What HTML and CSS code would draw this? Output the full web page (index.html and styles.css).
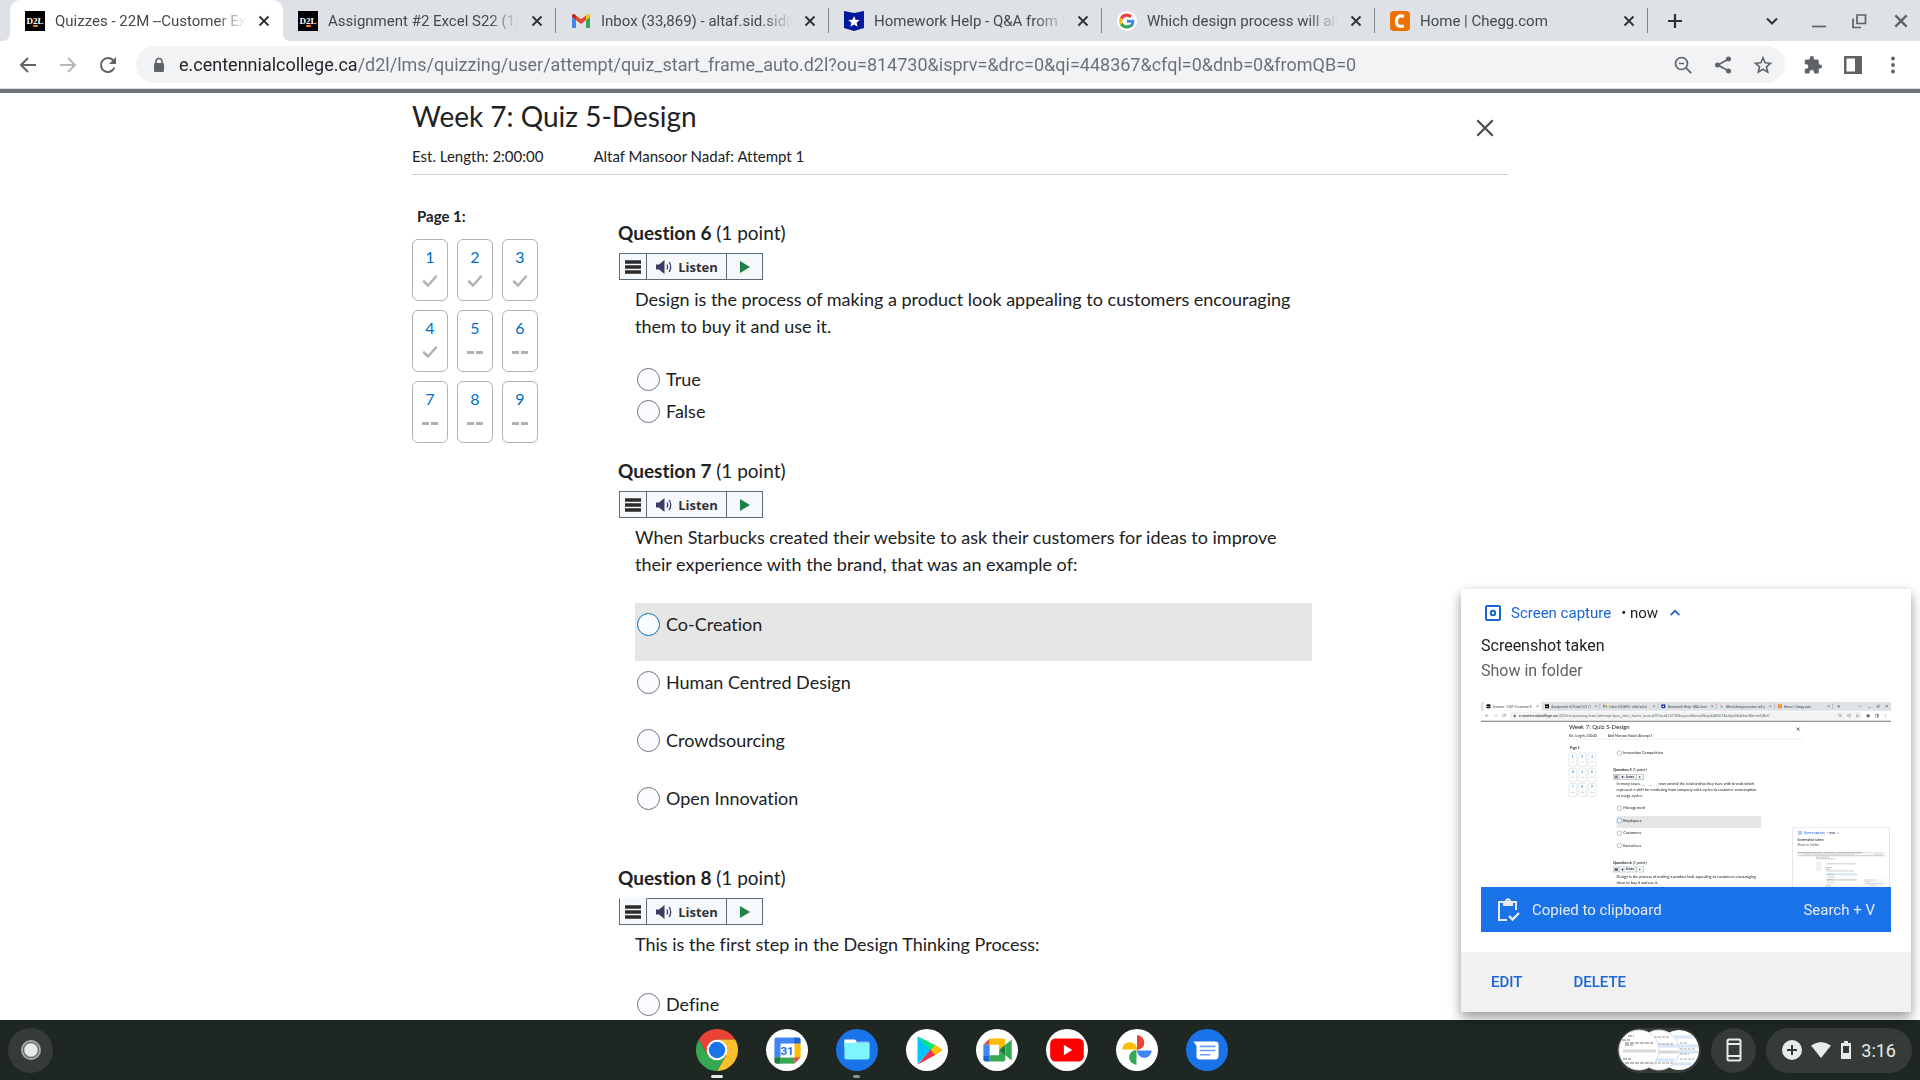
FILE: index.html
```html
<!DOCTYPE html>
<html lang="en">
<head>
    <meta charset="UTF-8">
    <meta name="viewport" content="width=device-width, initial-scale=1.0">
    <title>Quizzes - 22M --Customer Experience</title>
    <link rel="stylesheet" href="styles.css">
</head>
<body>
    <!-- Shared icons -->
    <svg class="icon-defs" aria-hidden="true">
        <symbol id="i-d2l" viewBox="0 0 20 20">
            <rect width="20" height="20" fill="#000"/>
            <rect x="8" y="14" width="5" height="2" fill="#e87511"/>
            <text x="10" y="13" text-anchor="middle" font-family="Liberation Serif, serif" font-weight="bold" font-size="9" fill="#fff">D2L</text>
        </symbol>
        <symbol id="i-gmail" viewBox="0 0 20 20">
            <path fill="#4285f4" d="M1 6l4 3v8H2.300A1.300 1.300 0 0 1 1 15.700z"/>
            <path fill="#34a853" d="M19 6l-4 3v8h2.700a1.300 1.300 0 0 0 1.300-1.300z"/>
            <path fill="#ea4335" d="M5 4.500l5 3.800 5-3.800V9l-5 4-5-4z"/>
            <path fill="#fbbc04" d="M15 4.500V9l4-3V5c0-2-2-2.500-3.200-1.300z"/>
            <path fill="#c5221f" d="M5 4.500V9L1 6V5c0-2 2-2.500 3.200-1.300z"/>
        </symbol>
        <symbol id="i-star-badge" viewBox="0 0 20 20">
            <path fill="#00189b" d="M0 0l10 2 10-2v17l-10 3-10-3z"/>
            <path fill="#fff" d="M10 5l1.600 3.800 4 .3-3 2.700 1 4-3.600-2.200-3.600 2.200 1-4-3-2.700 4-.3z"/>
        </symbol>
        <symbol id="i-google" viewBox="0 0 20 20">
            <circle cx="10" cy="10" r="10" fill="#fff"/>
            <path fill="#4285f4" d="M17.300 8.700H10v3h4.200a3.700 3.700 0 0 1-1.600 2.400l2.500 2c1.600-1.500 2.600-3.900 2.200-7.400z"/>
            <path fill="#34a853" d="M10 17.400c2 0 3.800-.7 5.100-1.900l-2.500-2c-2.200 1.600-6 .8-7-1.800L3 13.700a7.500 7.500 0 0 0 7 3.700z"/>
            <path fill="#fbbc05" d="M5.600 11.700a4.600 4.600 0 0 1 0-3.200L3 6.400a7.600 7.600 0 0 0 0 7.300z"/>
            <path fill="#ea4335" d="M5.600 8.500C6.700 5.400 10.500 4.700 12.900 7l2.200-2.200C11.500 1.300 5.400 1.900 3 6.400z"/>
        </symbol>
        <symbol id="i-chegg" viewBox="0 0 20 20">
            <rect width="20" height="20" rx="4" fill="#eb7100"/>
            <path d="M14 5.500C9 3.800 6.500 6 6.500 10.500S9.500 16 14 15" fill="none" stroke="#fff" stroke-width="3.200"/>
        </symbol>
        <symbol id="i-close" viewBox="0 0 16 16">
            <path d="M3.500 3.500l9 9M12.500 3.500l-9 9" fill="none" stroke="currentColor" stroke-width="1.900"/>
        </symbol>
        <symbol id="i-close-thin" viewBox="0 0 20 20">
            <path d="M3 3l14 14M17 3L3 17" fill="none" stroke="currentColor" stroke-width="2"/>
        </symbol>
        <symbol id="i-back" viewBox="0 0 20 20">
            <path d="M18 10H3M10 3l-7 7 7 7" fill="none" stroke="currentColor" stroke-width="2"/>
        </symbol>
        <symbol id="i-reload" viewBox="0 0 20 20">
            <path d="M16.500 12.500a7 7 0 1 1-1.600-7.500l1.600 1.600" fill="none" stroke="currentColor" stroke-width="2"/>
            <path d="M18 2v7h-7z" fill="currentColor"/>
        </symbol>
        <symbol id="i-lock" viewBox="0 0 16 16">
            <path d="M5 7V4.500a3 3 0 0 1 6 0V7" fill="none" stroke="currentColor" stroke-width="1.600"/>
            <rect x="3" y="6" width="10" height="9" rx="1.200" fill="currentColor"/>
        </symbol>
        <symbol id="i-zoom" viewBox="0 0 20 20">
            <g fill="none" stroke="currentColor" stroke-width="1.700"><circle cx="8.500" cy="8.500" r="6"/><path d="M12.700 12.700l5.500 5.500M6 8.500h5"/></g>
        </symbol>
        <symbol id="i-share" viewBox="0 0 20 20">
            <path d="M15.500 4L5 10l10.500 6" fill="none" stroke="currentColor" stroke-width="1.700"/>
            <g fill="currentColor"><circle cx="15.500" cy="4" r="2.500"/><circle cx="4.500" cy="10" r="2.500"/><circle cx="15.500" cy="16" r="2.500"/></g>
        </symbol>
        <symbol id="i-star" viewBox="0 0 20 20">
            <path d="M10 2.800l2.100 5 5.400.5-4.100 3.500 1.300 5.300-4.700-2.900-4.700 2.900 1.300-5.300-4.100-3.500 5.400-.5z" fill="none" stroke="currentColor" stroke-width="1.600"/>
        </symbol>
        <symbol id="i-puzzle" viewBox="0 0 20 20">
            <path fill="currentColor" d="M17 9.500h-1.200V6.100c0-.9-.7-1.600-1.600-1.600h-3.300V3.200a2.100 2.100 0 0 0-4.200 0v1.300H3.400c-.9 0-1.600.7-1.600 1.600v3.100H3a2.300 2.300 0 0 1 0 4.600H1.800v3.100c0 .9.700 1.600 1.600 1.600h3.100v-1.200a2.300 2.300 0 0 1 4.600 0v1.200h3.100c.9 0 1.600-.7 1.600-1.600v-3.300H17a2.050 2.050 0 0 0 0-4.100z"/>
        </symbol>
        <symbol id="i-panel" viewBox="0 0 20 20">
            <path fill="currentColor" fill-rule="evenodd" d="M1 1h18v18H1zM3.500 3.500v13H12v-13z"/>
        </symbol>
        <symbol id="i-dots" viewBox="0 0 20 20">
            <g fill="currentColor"><circle cx="10" cy="3.500" r="1.900"/><circle cx="10" cy="10" r="1.900"/><circle cx="10" cy="16.500" r="1.900"/></g>
        </symbol>
        <symbol id="i-plus" viewBox="0 0 16 16">
            <path d="M8 1v14M1 8h14" fill="none" stroke="currentColor" stroke-width="2.200"/>
        </symbol>
        <symbol id="i-chevron" viewBox="0 0 16 16">
            <path d="M3 5.500l5 5 5-5" fill="none" stroke="currentColor" stroke-width="2"/>
        </symbol>
        <symbol id="i-minimize" viewBox="0 0 16 16">
            <path d="M1 13.500h14" fill="none" stroke="currentColor" stroke-width="1.700"/>
        </symbol>
        <symbol id="i-restore" viewBox="0 0 16 16">
            <path d="M6 2h8.500v8.500H6zM2 5.500v9h8" fill="none" stroke="currentColor" stroke-width="1.700"/>
        </symbol>
        <symbol id="i-check" viewBox="0 0 16 16">
            <path d="M2 8.500l4 4 8-9" fill="none" stroke="#adb3b9" stroke-width="2.500" stroke-linecap="round" stroke-linejoin="round"/>
        </symbol>
        <symbol id="i-dashes" viewBox="0 0 16 16">
            <path d="M0 8.500h7M9 8.500h7" fill="none" stroke="#adb3b9" stroke-width="3"/>
        </symbol>
        <symbol id="i-menu" viewBox="0 0 18 16">
            <path d="M1 3h16M1 8h16M1 13h16" fill="none" stroke="#2b2b2b" stroke-width="3.400"/>
        </symbol>
        <symbol id="i-speaker" viewBox="0 0 18 16">
            <path d="M1 5.500h3L9.500 1v14L4 10.500H1z" fill="#3e3c64"/>
            <path d="M12 5.500q1.500 2.500 0 5M14.200 3q3 5 0 10" fill="none" stroke="#3e3c64" stroke-width="1.300"/>
        </symbol>
        <symbol id="i-play" viewBox="0 0 12 12"><path d="M1 0l10 6-10 6z" fill="#1d8046"/></symbol>
        <symbol id="i-capture" viewBox="0 0 16 16">
            <g fill="none" stroke="#1a65d6" stroke-width="2"><rect x="1" y="1" width="14" height="14" rx="1"/><circle cx="8" cy="8" r="2.200"/></g>
        </symbol>
        <!-- Player bar as it appears in small previews -->
        <symbol id="mini-listen" viewBox="0 0 146 28">
            <path d="M1 1h143v26H1zM29 1v26M109 1v26" fill="#f6f9fc" stroke="#657380" stroke-width="2"/>
            <use href="#i-menu" x="6" y="6" width="18" height="16"/>
            <use href="#i-speaker" x="38" y="6" width="18" height="16"/>
            <use href="#i-play" x="120" y="8" width="12" height="12"/>
            <text x="60" y="19" font-family="Open Sans, sans-serif" font-weight="bold" font-size="13" fill="#333">Listen</text>
        </symbol>
    </svg>

    <!-- Tab strip -->
    <header class="browser">
        <div class="tab-strip">
            <div class="tab active">
                <svg class="favicon"><use href="#i-d2l"/></svg>
                <span class="tab-title">Quizzes - 22M --Customer Exp</span>
                <button class="tab-close" aria-label="Close tab"><svg><use href="#i-close"/></svg></button>
            </div>
            <div class="tab">
                <svg class="favicon"><use href="#i-d2l"/></svg>
                <span class="tab-title">Assignment #2 Excel S22 (1)</span>
                <button class="tab-close" aria-label="Close tab"><svg><use href="#i-close"/></svg></button>
            </div>
            <div class="tab">
                <svg class="favicon"><use href="#i-gmail"/></svg>
                <span class="tab-title">Inbox (33,869) - altaf.sid.sid@</span>
                <button class="tab-close" aria-label="Close tab"><svg><use href="#i-close"/></svg></button>
            </div>
            <div class="tab">
                <svg class="favicon"><use href="#i-star-badge"/></svg>
                <span class="tab-title">Homework Help - Q&amp;A from C</span>
                <button class="tab-close" aria-label="Close tab"><svg><use href="#i-close"/></svg></button>
            </div>
            <div class="tab">
                <svg class="favicon"><use href="#i-google"/></svg>
                <span class="tab-title">Which design process will allo</span>
                <button class="tab-close" aria-label="Close tab"><svg><use href="#i-close"/></svg></button>
            </div>
            <div class="tab">
                <svg class="favicon"><use href="#i-chegg"/></svg>
                <span class="tab-title">Home | Chegg.com</span>
                <button class="tab-close" aria-label="Close tab"><svg><use href="#i-close"/></svg></button>
            </div>
            <button class="new-tab" aria-label="New tab"><svg><use href="#i-plus"/></svg></button>
            <div class="window-controls">
                <button class="dark" aria-label="Search tabs"><svg><use href="#i-chevron"/></svg></button>
                <button aria-label="Minimize"><svg><use href="#i-minimize"/></svg></button>
                <button aria-label="Restore"><svg><use href="#i-restore"/></svg></button>
                <button class="big" aria-label="Close window"><svg><use href="#i-close"/></svg></button>
            </div>
        </div>
        <div class="toolbar">
            <button class="tool" aria-label="Back"><svg><use href="#i-back"/></svg></button>
            <button class="tool forward" aria-label="Forward" disabled><svg><use href="#i-back"/></svg></button>
            <button class="tool" aria-label="Reload"><svg><use href="#i-reload"/></svg></button>
            <div class="omnibox">
                <svg class="lock"><use href="#i-lock"/></svg>
                <input class="url" type="text" aria-label="Address" value="e.centennialcollege.ca/d2l/lms/quizzing/user/attempt/quiz_start_frame_auto.d2l?ou=814730&amp;isprv=&amp;drc=0&amp;qi=448367&amp;cfql=0&amp;dnb=0&amp;fromQB=0">
                <button class="tool" aria-label="Zoom"><svg><use href="#i-zoom"/></svg></button>
                <button class="tool" aria-label="Share"><svg><use href="#i-share"/></svg></button>
                <button class="tool" aria-label="Bookmark"><svg><use href="#i-star"/></svg></button>
            </div>
            <button class="tool" aria-label="Extensions"><svg><use href="#i-puzzle"/></svg></button>
            <button class="tool" aria-label="Side panel"><svg><use href="#i-panel"/></svg></button>
            <button class="tool" aria-label="Menu"><svg><use href="#i-dots"/></svg></button>
        </div>
    </header>

    <!-- Quiz page -->
    <main class="page">
        <div class="quiz">
            <div class="quiz-header">
                <div>
                    <h1>Week 7: Quiz 5-Design</h1>
                    <p class="quiz-info"><span>Est. Length: 2:00:00</span><span>Altaf Mansoor Nadaf: Attempt 1</span></p>
                </div>
                <button class="quiz-close" aria-label="Close quiz"><svg><use href="#i-close-thin"/></svg></button>
            </div>
            <div class="quiz-body">
                <nav class="quiz-nav">
                    <h2>Page 1:</h2>
                    <div class="nav-grid">
                        <a href="#q1">1<svg><use href="#i-check"/></svg></a>
                        <a href="#q2">2<svg><use href="#i-check"/></svg></a>
                        <a href="#q3">3<svg><use href="#i-check"/></svg></a>
                        <a href="#q4">4<svg><use href="#i-check"/></svg></a>
                        <a href="#q5">5<svg><use href="#i-dashes"/></svg></a>
                        <a href="#q6">6<svg><use href="#i-dashes"/></svg></a>
                        <a href="#q7">7<svg><use href="#i-dashes"/></svg></a>
                        <a href="#q8">8<svg><use href="#i-dashes"/></svg></a>
                        <a href="#q9">9<svg><use href="#i-dashes"/></svg></a>
                    </div>
                </nav>
                <div class="questions">
                    <section class="question" id="q6">
                        <h3>Question 6 <span>(1 point)</span></h3>
                        <div class="listen-bar">
                            <button class="listen-menu" aria-label="Reader menu"><svg><use href="#i-menu"/></svg></button>
                            <button class="listen-main"><svg><use href="#i-speaker"/></svg>Listen</button>
                            <button class="listen-play" aria-label="Play"><svg><use href="#i-play"/></svg></button>
                        </div>
                        <p>Design is the process of making a product look appealing to customers encouraging them to buy it and use it.</p>
                        <div class="answers compact">
                            <label class="answer"><input type="radio" name="q6">True</label>
                            <label class="answer"><input type="radio" name="q6">False</label>
                        </div>
                    </section>
                    <section class="question" id="q7">
                        <h3>Question 7 <span>(1 point)</span></h3>
                        <div class="listen-bar">
                            <button class="listen-menu" aria-label="Reader menu"><svg><use href="#i-menu"/></svg></button>
                            <button class="listen-main"><svg><use href="#i-speaker"/></svg>Listen</button>
                            <button class="listen-play" aria-label="Play"><svg><use href="#i-play"/></svg></button>
                        </div>
                        <p>When Starbucks created their website to ask their customers for ideas to improve their experience with the brand, that was an example of:</p>
                        <div class="answers">
                            <label class="answer hovered"><input type="radio" name="q7">Co-Creation</label>
                            <label class="answer"><input type="radio" name="q7">Human Centred Design</label>
                            <label class="answer"><input type="radio" name="q7">Crowdsourcing</label>
                            <label class="answer"><input type="radio" name="q7">Open Innovation</label>
                        </div>
                    </section>
                    <section class="question" id="q8">
                        <h3>Question 8 <span>(1 point)</span></h3>
                        <div class="listen-bar">
                            <button class="listen-menu open" aria-label="Reader menu"><svg><use href="#i-menu"/></svg></button>
                            <button class="listen-main"><svg><use href="#i-speaker"/></svg>Listen</button>
                            <button class="listen-play" aria-label="Play"><svg><use href="#i-play"/></svg></button>
                        </div>
                        <p>This is the first step in the Design Thinking Process:</p>
                        <div class="answers">
                            <label class="answer"><input type="radio" name="q8">Define</label>
                        </div>
                    </section>
                </div>
            </div>
        </div>
    </main>

    <!-- Notification -->
    <aside class="notification">
        <div class="notif-content">
            <div class="notif-top">
                <svg class="notif-icon"><use href="#i-capture"/></svg>
                <span class="notif-app">Screen capture</span>
                <span class="notif-time">• now</span>
                <button class="notif-collapse" aria-label="Collapse"><svg><use href="#i-chevron"/></svg></button>
            </div>
            <div class="notif-title">Screenshot taken</div>
            <div class="notif-sub">Show in folder</div>
            <svg class="thumb" viewBox="0 0 1920 866" font-family="Lato, sans-serif" fill="#202122" font-size="18" role="img" aria-label="Preview">
                <rect width="1920" height="866" fill="#fff"/>
                <path d="M0 0h1920v41H0z" fill="#dee1e6"/>
                <path d="M11 41V10Q11 0 21 0h253q10 0 10 10v31z" fill="#fff"/>
                <path d="M556 8v25M829 8v25M1102 8v25M1375 8v25M1647 8v25" stroke="#85898d" stroke-width="2"/>
                <use href="#i-d2l" x="25" y="10" width="20" height="20"/>
                <use href="#i-d2l" x="299" y="10" width="20" height="20"/>
                <use href="#i-gmail" x="571" y="10" width="20" height="20"/>
                <use href="#i-star-badge" x="844" y="10" width="20" height="20"/>
                <use href="#i-google" x="1116" y="10" width="20" height="20"/>
                <use href="#i-chegg" x="1389" y="10" width="20" height="20"/>
                <g font-family="Roboto, sans-serif" font-size="15" fill="#45494d">
                    <text x="55" y="26">Quizzes - 22M --Customer E</text>
                    <text x="329" y="26">Assignment #2 Excel S22 (1</text>
                    <text x="601" y="26">Inbox (33,869) - altaf.sid.si</text>
                    <text x="874" y="26">Homework Help - Q&amp;A from</text>
                    <text x="1146" y="26">Which design process will a</text>
                    <text x="1419" y="26">Home | Chegg.com</text>
                </g>
                <g color="#303336">
                    <use href="#i-close" x="257" y="12" width="16" height="16"/>
                    <use href="#i-close" x="530" y="12" width="16" height="16"/>
                    <use href="#i-close" x="802" y="12" width="16" height="16"/>
                    <use href="#i-close" x="1075" y="12" width="16" height="16"/>
                    <use href="#i-close" x="1347" y="12" width="16" height="16"/>
                    <use href="#i-close" x="1620" y="12" width="16" height="16"/>
                    <use href="#i-plus" x="1667" y="12" width="16" height="16"/>
                    <use href="#i-chevron" x="1765" y="12" width="16" height="16"/>
                    <use href="#i-minimize" x="1812" y="12" width="16" height="16"/>
                    <use href="#i-restore" x="1852" y="12" width="16" height="16"/>
                    <use href="#i-close" x="1890" y="10" width="20" height="20"/>
                </g>
                <rect x="135" y="46" width="1650" height="37" rx="18" fill="#f1f3f4"/>
                <g color="#5f6368">
                    <use href="#i-back" x="18" y="54" width="20" height="20"/>
                    <use href="#i-back" x="-78" y="54" width="20" height="20" transform="scale(-1 1)" opacity=".5"/>
                    <use href="#i-reload" x="98" y="54" width="20" height="20"/>
                    <use href="#i-lock" x="150" y="56" width="16" height="16"/>
                    <use href="#i-zoom" x="1673" y="54" width="20" height="20"/>
                    <use href="#i-share" x="1713" y="54" width="20" height="20"/>
                    <use href="#i-star" x="1753" y="54" width="20" height="20"/>
                    <use href="#i-puzzle" x="1803" y="54" width="20" height="20"/>
                    <use href="#i-panel" x="1843" y="54" width="20" height="20"/>
                    <use href="#i-dots" x="1883" y="54" width="20" height="20"/>
                </g>
                <text x="178" y="70" font-family="Roboto, sans-serif" fill="#202124">e.centennialcollege.ca<tspan fill="#6b6f73">/d2l/lms/quizzing/user/attempt/quiz_start_frame_auto.d2l?ou=814730&amp;isprv=&amp;drc=0&amp;qi=448367&amp;cfql=0&amp;dnb=0&amp;fromQB=0</tspan></text>
                <path d="M0 88h1920v4H0z" fill="#6e7477"/>
                <text x="412" y="127" font-size="28">Week 7: Quiz 5-Design</text>
                <text x="412" y="162" font-size="15">Est. Length: 2:00:00</text>
                <text x="593" y="162" font-size="15">Altaf Mansoor Nadaf: Attempt 1</text>
                <path d="M412 174h1096" stroke="#cdd5dc" stroke-width="2"/>
                <use href="#i-close" x="1472" y="114" width="26" height="26"/>
                <text x="417" y="221" font-size="15" font-weight="bold">Page 1:</text>
                <g fill="#fff" stroke="#c4c9ce" stroke-width="2">
                    <rect x="412" y="239" width="36" height="62" rx="5"/><rect x="457" y="239" width="36" height="62" rx="5"/><rect x="502" y="239" width="36" height="62" rx="5"/>
                    <rect x="412" y="310" width="36" height="62" rx="5"/><rect x="457" y="310" width="36" height="62" rx="5"/><rect x="502" y="310" width="36" height="62" rx="5"/>
                    <rect x="412" y="381" width="36" height="62" rx="5"/><rect x="457" y="381" width="36" height="62" rx="5"/><rect x="502" y="381" width="36" height="62" rx="5"/>
                </g>
                <g fill="#006fbf" font-size="16">
                    <text x="425" y="262">1</text><text x="470" y="262">2</text><text x="515" y="262">3</text>
                    <text x="425" y="333">4</text><text x="470" y="333">5</text><text x="515" y="333">6</text>
                    <text x="425" y="404">7</text><text x="470" y="404">8</text><text x="515" y="404">9</text>
                </g>
                <use href="#i-check" x="422" y="273" width="16" height="16"/><use href="#i-check" x="467" y="273" width="16" height="16"/><use href="#i-check" x="512" y="273" width="16" height="16"/>
                <use href="#i-check" x="422" y="344" width="16" height="16"/><use href="#i-dashes" x="467" y="344" width="16" height="16"/><use href="#i-dashes" x="512" y="344" width="16" height="16"/>
                <use href="#i-dashes" x="422" y="415" width="16" height="16"/><use href="#i-dashes" x="467" y="415" width="16" height="16"/><use href="#i-dashes" x="512" y="415" width="16" height="16"/>
                <rect x="635" y="534" width="677" height="56" fill="#e6e6e6"/>
                <g fill="#fbfcff" stroke="#6e7477" stroke-width="2">
                    <circle cx="648" cy="239" r="11"/><circle cx="648" cy="497" r="11"/><circle cx="648" cy="555" r="11" stroke="#006fbf"/><circle cx="648" cy="614" r="11"/><circle cx="648" cy="672" r="11"/>
                </g>
                <text x="666" y="245">Innovation Competition</text>
                <text x="618" y="324"><tspan font-weight="bold">Question 5</tspan> (1 point)</text>
                <use href="#mini-listen" x="618" y="337" width="146" height="28"/>
                <text x="635" y="390">In many cases, _________ now control the relationship they have with brands which</text>
                <text x="635" y="417">represent a shift for marketing from company sales cycles to customer consumption</text>
                <text x="635" y="443">or usage cycles.</text>
                <text x="666" y="503">Management</text>
                <text x="666" y="561">Employees</text>
                <text x="666" y="620">Customers</text>
                <text x="666" y="678">Executives</text>
                <text x="618" y="757"><tspan font-weight="bold">Question 6</tspan> (1 point)</text>
                <use href="#mini-listen" x="618" y="770" width="146" height="28"/>
                <text x="635" y="823">Design is the process of making a product look appealing to customers encouraging</text>
                <text x="635" y="850">them to buy it and use it.</text>
                <!-- notification inside the preview -->
                <rect x="1457" y="586" width="458" height="290" fill="#e3e4e6"/>
                <rect x="1461" y="589" width="450" height="290" fill="#fff"/>
                <g font-family="Roboto, sans-serif" font-size="15">
                    <use href="#i-capture" x="1485" y="604" width="18" height="18"/>
                    <text x="1511" y="618" fill="#1a65d6">Screen capture</text>
                    <text x="1622" y="618">• now</text>
                    <path d="M1668 616l5-5 5 5" fill="none" stroke="#1a65d6" stroke-width="2"/>
                    <text x="1481" y="650" font-size="16">Screenshot taken</text>
                    <text x="1481" y="675" font-size="16" fill="#5f6368">Show in folder</text>
                </g>
                <path d="M1481 702h410v8h-410z" fill="#e2e4e8"/>
                <path d="M1485 706h60M1552 706h50M1610 706h50M1668 706h60M1735 706h50" stroke="#73777c" stroke-width="4" stroke-dasharray="4 3"/>
                <path d="M1508 714h240M1840 714h40" stroke="#a6a9ad" stroke-width="3" stroke-dasharray="3 2"/>
                <path d="M1481 720h410" stroke="#777b7f" stroke-width="2"/>
                <path d="M1569 727h62M1569 734h90M1618 758h140M1613 775h30M1613 783h24M1617 791h130M1613 858h30M1613 865h24" stroke="#8b8f93" stroke-width="3" stroke-dasharray="5 2"/>
                <path d="M1569 748h27v44h-27z" fill="#eef1f5"/>
                <path d="M1616 802h145v10h-145z" fill="#d7e8f8"/><path d="M1616 828h145v9h-145z" fill="#dcdcdc"/>
                <path d="M1620 807h34M1620 820h38M1620 833h34M1620 846h34" stroke="#8b8f93" stroke-width="2"/>
                <path d="M1792 828h98v38h-98z" fill="#f5f6f7"/><path d="M1797 834h50M1797 841h26M1801 850h82M1822 858h35" stroke="#a2abb8" stroke-width="2"/>
            </svg>
            <div class="copied">
                <svg viewBox="0 0 24 24" fill="none" stroke="#e8eaed" stroke-width="2">
                    <path d="M11 22H3V4h17v8"/><path d="M8 4h8v3H8z" fill="#e8eaed"/><circle cx="12" cy="3" r="1.800"/><path d="M13 18l3.500 3.500L23 15" stroke-width="2.400"/>
                </svg>
                <span>Copied to clipboard</span>
                <span class="shortcut">Search + V</span>
            </div>
        </div>
        <div class="notif-actions">
            <button>EDIT</button>
            <button>DELETE</button>
        </div>
    </aside>

    <!-- Shelf -->
    <footer class="shelf">
        <button class="launcher" aria-label="Launcher"><span></span></button>
        <div class="apps">
            <button class="app running focused" aria-label="Chrome">
                <svg viewBox="0 0 40 40">
                    <path fill="#ea4335" d="M2.680 10A20 20 0 0 1 37.320 10H20l-8.660 15z"/>
                    <path fill="#fbc02d" d="M37.320 10A20 20 0 0 1 20 40l8.660-15L20 10z"/>
                    <path fill="#34a853" d="M20 40A20 20 0 0 1 2.680 10l8.660 15h17.320z"/>
                    <circle cx="20" cy="20" r="9.800" fill="#fff"/><circle cx="20" cy="20" r="7.800" fill="#1a73e8"/>
                </svg>
            </button>
            <button class="app" aria-label="Calendar">
                <svg viewBox="0 0 40 40">
                    <circle cx="20" cy="20" r="20" fill="#fff"/>
                    <path fill="#4285f4" d="M8 10q0-2 2-2h18v6H14v13H8z"/>
                    <path fill="#1967d2" d="M27 8h4q2 0 2 2v4h-6z"/>
                    <path fill="#fbbc04" d="M27 14h6v13h-6z"/>
                    <path fill="#188038" d="M8 27h6v6h-4q-2 0-2-2z"/>
                    <path fill="#34a853" d="M14 27h13v6H14z"/>
                    <path fill="#ea4335" d="M27 27h6l-6 6z"/>
                    <path fill="#fff" d="M14 14h13v13H14z"/>
                    <text x="20" y="25" text-anchor="middle" font-family="Roboto, sans-serif" font-weight="bold" font-size="11" fill="#1a73e8">31</text>
                </svg>
            </button>
            <button class="app running" aria-label="Files">
                <svg viewBox="0 0 40 40">
                    <circle cx="20" cy="20" r="20" fill="#1a73e8"/>
                    <path fill="#fff" d="M8 10h10l3 3v4H8z"/><path fill="#8ab4f8" d="M19 12h12l1 3H20z"/>
                    <path fill="#7df5fb" d="M8 13h24v14q0 2-2 2H10q-2 0-2-2z"/>
                </svg>
            </button>
            <button class="app" aria-label="Play Store">
                <svg viewBox="0 0 40 40">
                    <circle cx="20" cy="20" r="20" fill="#fff"/>
                    <path fill="#00c3ff" d="M11 7l13 13-13 13z"/>
                    <path fill="#00e676" d="M11 7l18 9-5 5z"/>
                    <path fill="#f43249" d="M11 34l18-10-5-5z"/>
                    <path fill="#ffc107" d="M28 15l7 5-7 5-4.500-5z"/>
                </svg>
            </button>
            <button class="app" aria-label="Meet">
                <svg viewBox="0 0 40 40">
                    <circle cx="20" cy="20" r="20" fill="#fff"/>
                    <path fill="#ea4335" d="M7 15l6-6v6z"/>
                    <path fill="#4285f4" d="M7 15h6v10H7z"/>
                    <path fill="#1967d2" d="M7 25h6v6H9q-2 0-2-2z"/>
                    <path fill="#34a853" d="M13 25h9v-5l6 4v5q0 2-2 2H13z"/>
                    <path fill="#fbbc04" d="M13 9h13q2 0 2 2v6l-6 3v-5h-9z"/>
                    <path fill="#188038" d="M22 20l6-5v10z"/><path fill="#34a853" d="M28 15l6-5v20l-6-5z"/>
                </svg>
            </button>
            <button class="app" aria-label="YouTube">
                <svg viewBox="0 0 40 40">
                    <circle cx="20" cy="20" r="20" fill="#fff"/>
                    <rect x="4" y="9" width="32" height="22" rx="5" fill="#f00"/><path fill="#fff" d="M17 15l8 5-8 5z"/>
                </svg>
            </button>
            <button class="app" aria-label="Photos">
                <svg viewBox="0 0 40 40">
                    <circle cx="20" cy="20" r="20" fill="#fff"/>
                    <path fill="#ea4335" d="M20 6a7 7 0 0 1 0 14z"/><path fill="#4285f4" d="M34 20.500a7 7 0 0 1-14 0z"/>
                    <path fill="#34a853" d="M19.500 34a7 7 0 0 1 0-14z"/><path fill="#fbbc04" d="M6 19.500a7 7 0 0 1 14 0z"/>
                </svg>
            </button>
            <button class="app" aria-label="Messages">
                <svg viewBox="0 0 40 40">
                    <circle cx="20" cy="20" r="20" fill="#1a73e8"/>
                    <path fill="#fff" d="M7 12h21q3 0 3 3v11q0 3-3 3H13q-3 0-3-3V16z"/>
                    <path d="M13 16.500h15M13 20.500h15M13 24.500h10" stroke="#669df6" stroke-width="1.600"/>
                </svg>
            </button>
        </div>
        <div class="status">
            <button class="tote" aria-label="Recent captures">
                <svg viewBox="0 0 82 42">
                    <circle cx="61" cy="21" r="20" fill="#fff"/>
                    <path d="M48 8h26M54 17h26M54 23h26M50 35h24" stroke="#d3e6fa" stroke-width="3"/><path d="M62 14h8M62 20h16M62 25h9M62 30h14" stroke="#a4a9b0" stroke-width="1" stroke-dasharray="3 1"/>
                    <circle cx="41" cy="21" r="20" fill="#fff" stroke="#dadce0" stroke-width="1"/>
                    <path d="M32 17h28M34 31h22" stroke="#d3e6fa" stroke-width="3"/><path d="M41 23h19" stroke="#d8d8d8" stroke-width="3"/><path d="M32 8h20M36 15h20M36 34h20" stroke="#999" stroke-width="1" stroke-dasharray="3 1"/>
                    <circle cx="21" cy="21" r="20" fill="#fff" stroke="#dadce0" stroke-width="1"/>
                    <path d="M5 22h33" stroke="#d8d8d8" stroke-width="3"/><path d="M10 7h6M4 11h8M7 14h28M7 16h8M5 30h8M7 34h28" stroke="#777" stroke-width="1" stroke-dasharray="4 1"/>
                </svg>
            </button>
            <button class="phone" aria-label="Phone hub">
                <svg viewBox="0 0 16 24"><rect x="1.500" y="1.500" width="13" height="21" rx="1.500" fill="none" stroke="#e8eaed" stroke-width="2"/><path d="M2 6h12M2 18h12" stroke="#e8eaed" stroke-width="2"/></svg>
            </button>
            <button class="tray">
                <svg viewBox="0 0 20 20"><circle cx="10" cy="10" r="10" fill="#e8eaed"/><path d="M10 5v10M5 10h10" stroke="#353b37" stroke-width="2"/></svg>
                <svg viewBox="0 0 20 20"><path d="M0 5.500Q10-1.500 20 5.500L10 18z" fill="#e8eaed"/></svg>
                <svg class="battery" viewBox="0 0 12 20"><path fill="#e8eaed" fill-rule="evenodd" d="M4 1h4v2h3v16H1V3h3zM3 6v7h6V6z"/></svg>
                <span>3:16</span>
            </button>
        </div>
    </footer>
</body>
</html>
```
FILE: styles.css
```css
* {
    margin: 0;
    padding: 0;
    box-sizing: border-box;
}

body {
    display: flex;
    flex-direction: column;
    height: 100vh;
    overflow: hidden;
    background-color: #fff;
    color: #202122;
    font-family: Roboto, sans-serif;
    font-variant-ligatures: none;
}

button {
    border: none;
    background: none;
    font: inherit;
    color: inherit;
    cursor: pointer;
}

svg {
    display: block;
}

.icon-defs {
    display: none;
}

/* Browser */
.browser {
    border-bottom: 4px solid #6e7477;
}

.tab-strip {
    display: flex;
    height: 41px;
    padding-left: 10px;
    background-color: #dee1e6;
}

.tab {
    position: relative;
    display: flex;
    align-items: center;
    flex: 0 1 273px;
    min-width: 0;
    gap: 10px;
    padding: 0 11px 0 15px;
    color: #45494d;
    font-size: 15px;
}

.tab::after {
    content: "";
    position: absolute;
    right: 0;
    top: 8px;
    width: 1px;
    height: 25px;
    background-color: #85898d;
}

.tab.active {
    background-color: #fff;
    border-radius: 10px 10px 0 0;
}

/* curved feet of the active tab */
.tab.active::before,
.tab.active::after {
    content: "";
    position: absolute;
    top: auto;
    bottom: 0;
    width: 8px;
    height: 8px;
    background: radial-gradient(circle at 0 0, transparent 8px, #fff 8px);
}

.tab.active::before {
    left: -8px;
}

.tab.active::after {
    right: -8px;
    background: radial-gradient(circle at 100% 0, transparent 8px, #fff 8px);
}

.favicon {
    width: 20px;
    height: 20px;
    flex: none;
}

.tab-title {
    flex: 1;
    overflow: hidden;
    white-space: nowrap;
    line-height: 24px;
    -webkit-mask-image: linear-gradient(to left, transparent, #000 30px);
    mask-image: linear-gradient(to left, transparent, #000 30px);
}

.tab-close svg,
.new-tab svg,
.window-controls svg {
    width: 16px;
    height: 16px;
}

.tab-close,
.new-tab {
    color: #303336;
}

.new-tab {
    width: 54px;
    padding-left: 19px;
}

.window-controls {
    display: flex;
    align-items: center;
    gap: 24px;
    margin-left: auto;
    padding-right: 9px;
    color: #5f6368;
}

.window-controls .dark {
    margin-right: 7px;
    color: #303336;
}

.window-controls .big svg {
    width: 20px;
    height: 20px;
}

.toolbar {
    display: flex;
    align-items: center;
    gap: 20px;
    height: 48px;
    padding: 0 17px 0 18px;
    border-bottom: 1px solid #dadce0;
}

.tool {
    flex: none;
    color: #5f6368;
}

.tool svg {
    width: 20px;
    height: 20px;
}

.forward {
    color: #b5b8bb;
    transform: scaleX(-1);
}

.omnibox {
    display: flex;
    align-items: center;
    flex: 1;
    gap: 20px;
    height: 37px;
    margin: 0 -2px;
    padding: 0 12px 0 15px;
    border-radius: 19px;
    background-color: #f1f3f4;
}

.lock {
    width: 16px;
    height: 16px;
    flex: none;
    color: #5f6368;
}

.url {
    flex: 1;
    min-width: 0;
    height: 30px;
    margin-left: -8px;
    border: none;
    outline: none;
    font-family: Roboto, sans-serif;
    font-size: 18px;
    /* host name dark, the rest of the address grey */
    background: linear-gradient(to right, #202124 178px, #6b6f73 178px);
    -webkit-background-clip: text;
    background-clip: text;
    -webkit-text-fill-color: transparent;
}

/* Quiz */
.page {
    flex: 1;
    min-height: 0;
    overflow: hidden;
    font-family: Lato, sans-serif;
}

.quiz {
    max-width: 1096px;
    margin: 0 auto;
}

.quiz-header {
    display: flex;
    justify-content: space-between;
    padding: 4px 0 8px;
    border-bottom: 1px solid #cdd5dc;
}

h1 {
    font-size: 28px;
    font-weight: normal;
    line-height: 38px;
}

.quiz-info {
    display: flex;
    gap: 50px;
    margin-top: 11px;
    font-size: 15px;
    line-height: 20px;
}

.quiz-close {
    align-self: flex-start;
    margin: 20px 12px 0 0;
    color: #494c4e;
}

.quiz-close svg {
    width: 22px;
    height: 22px;
}

.quiz-body {
    display: flex;
}

.quiz-nav {
    width: 206px;
    flex: none;
    padding-top: 31px;
}

.quiz-nav h2 {
    margin: 0 0 13px 5px;
    font-size: 15px;
    line-height: 20px;
}

.nav-grid {
    display: grid;
    grid-template-columns: repeat(3, 36px);
    gap: 9px;
}

.nav-grid a {
    display: flex;
    flex-direction: column;
    align-items: center;
    gap: 6px;
    height: 62px;
    padding-top: 7px;
    border: 1px solid #adb3b9;
    border-radius: 6px;
    color: #006fbf;
    font-size: 16px;
    line-height: 20px;
    text-decoration: none;
}

.nav-grid svg {
    width: 16px;
    height: 16px;
}

.questions {
    flex: 1;
    max-width: 694px;
    padding-top: 44px;
}

.question {
    margin-bottom: 29px;
    font-size: 18px;
    line-height: 27px;
}

.question h3 {
    font-size: 19px;
    line-height: 28px;
}

.question h3 span {
    font-weight: normal;
}

.listen-bar {
    display: inline-flex;
    height: 27px;
    margin: 6px 0 6px 1px;
    border-radius: 2px;
    font-family: "Open Sans", sans-serif;
    font-size: 13px;
    font-weight: bold;
    line-height: 20px;
    vertical-align: top;
}

.listen-bar button {
    display: flex;
    align-items: center;
    justify-content: center;
    border: 1px solid #5d6b78;
    background-color: #f6f9fc;
    color: #333;
}

.listen-bar button + button {
    border-left: none;
}

.listen-bar .listen-menu {
    width: 28px;
}

.listen-bar .listen-menu.open {
    border-top-color: transparent;
}

.listen-bar .listen-main {
    width: 80px;
    gap: 5px;
}

.listen-bar .listen-play {
    width: 36px;
}

.listen-bar svg {
    width: 18px;
    height: 16px;
}

.listen-bar .listen-play svg {
    width: 12px;
    height: 12px;
}

.question p,
.answers {
    margin-left: 17px;
}

.answers {
    margin-top: 25px;
}

.answer {
    display: flex;
    align-items: flex-start;
    gap: 6px;
    min-height: 58px;
    padding: 9px 0 0 2px;
    line-height: 25px;
}

.answers.compact {
    display: grid;
    gap: 4px;
    padding: 2px 0 1px;
}

.answers.compact .answer {
    min-height: 28px;
    padding-top: 0;
}

.answer input {
    appearance: none;
    width: 23px;
    height: 23px;
    margin-top: 1px;
    border: 1px solid #6e7477;
    border-radius: 50%;
    background-color: #fbfcff;
}

.answer.hovered {
    background-color: #e6e6e6;
}

.answer.hovered input {
    border-color: #006fbf;
}

/* Notification */
.notification {
    position: fixed;
    right: 9px;
    bottom: 68px;
    z-index: 10;
    width: 450px;
    background-color: #fff;
    box-shadow: 0 7px 12px rgba(0, 0, 0, 0.35), 0 0 8px rgba(0, 0, 0, 0.1);
    font-size: 16px;
}

.notif-content {
    padding: 12px 20px 20px;
}

.notif-top {
    display: flex;
    align-items: center;
    gap: 10px;
    height: 24px;
    padding-left: 4px;
    font-size: 15px;
}

.notif-icon {
    width: 16px;
    height: 16px;
}

.notif-app {
    color: #1a65d6;
}

.notif-time {
    word-spacing: normal;
}

.notif-collapse {
    color: #1a65d6;
    transform: rotate(180deg);
}

.notif-collapse svg {
    width: 14px;
    height: 14px;
}

.notif-title,
.notif-sub {
    line-height: 25px;
}

.notif-title {
    margin-top: 8px;
}

.notif-sub {
    color: #5f6368;
}

.thumb {
    width: 100%;
    margin-top: 19px;
}

.copied {
    display: flex;
    align-items: center;
    gap: 12px;
    height: 45px;
    padding: 0 16px 0 15px;
    background-color: #1a73e8;
    color: #e8eaed;
    font-size: 15px;
}

.copied svg {
    width: 24px;
    height: 24px;
}

.shortcut {
    margin-left: auto;
}

.notif-actions {
    display: flex;
    gap: 51px;
    height: 60px;
    padding-left: 30px;
    background-color: #f1f1f1;
    color: #1a65d6;
    font-size: 15px;
    font-weight: 500;
}

/* Shelf */
.shelf {
    display: grid;
    grid-template-columns: 1fr auto 1fr;
    align-items: center;
    height: 60px;
    padding: 0 8px;
    background-color: #1f2722;
}

.launcher,
.phone {
    display: flex;
    align-items: center;
    justify-content: center;
    width: 45px;
    height: 45px;
    border-radius: 50%;
    background-color: #353b37;
}

.launcher span {
    width: 20px;
    height: 20px;
    border: 2px solid #a9aeab;
    border-radius: 50%;
    background: radial-gradient(circle, #e8eaed 6px, #353b37 8px);
}

.apps {
    display: flex;
    gap: 28px;
    padding-left: 4px;
}

.app {
    position: relative;
    width: 42px;
    height: 60px;
}

.app svg {
    width: 42px;
    height: 42px;
}

.app.running::after {
    content: "";
    position: absolute;
    left: 50%;
    bottom: 2px;
    width: 7px;
    height: 3px;
    margin-left: -4px;
    border-radius: 2px;
    background-color: #8d928f;
}

.app.focused::after {
    width: 12px;
    margin-left: -6px;
    background-color: #e8eaed;
}

.status {
    display: flex;
    justify-content: flex-end;
    gap: 10px;
}

.tote {
    width: 84px;
    height: 45px;
    padding: 0 1px;
    border-radius: 23px;
    background-color: #353b37;
}

.phone svg {
    width: 16px;
    height: 24px;
}

.tray {
    display: flex;
    align-items: center;
    gap: 9px;
    height: 45px;
    padding: 0 16px;
    border-radius: 23px;
    background-color: #353b37;
    color: #e8eaed;
    font-size: 18px;
}

.tray svg {
    width: 20px;
    height: 20px;
}

.tray .battery {
    width: 12px;
}
```
